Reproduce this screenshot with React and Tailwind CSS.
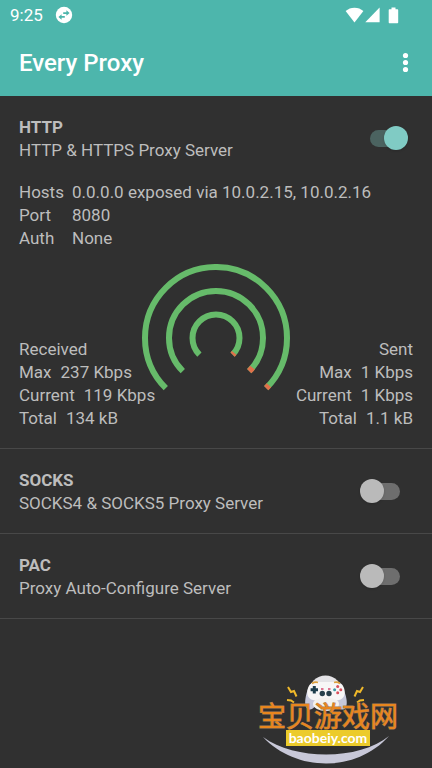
import React, { useState } from 'react';

const servers = [
  { id: 'socks', title: 'SOCKS', description: 'SOCKS4 & SOCKS5 Proxy Server' },
  { id: 'pac', title: 'PAC', description: 'Proxy Auto-Configure Server' },
];

const httpDetails = [
  { label: 'Hosts', value: '0.0.0.0 exposed via 10.0.2.15, 10.0.2.16' },
  { label: 'Port', value: '8080' },
  { label: 'Auth', value: 'None' },
];

const received = [
  { label: 'Max', value: '237 Kbps' },
  { label: 'Current', value: '119 Kbps' },
  { label: 'Total', value: '134 kB' },
];

const sent = [
  { label: 'Max', value: '1 Kbps' },
  { label: 'Current', value: '1 Kbps' },
  { label: 'Total', value: '1.1 kB' },
];

const StatusBar = () => (
  <div className="flex h-[30px] items-center justify-between pl-[10px] pr-[33px]">
    <div className="flex items-center gap-3">
      <span className="text-[17px] leading-[23px]">9:25</span>
      <svg className="size-[18px]" viewBox="0 0 18 18">
        <circle cx="9" cy="9" r="8.2" fill="#fff" />
        <path
          d="M8.2 6.2h3.2V4.2l3.2 2.8-3.2 2.8V7.9H8.2zM9.8 10.1H6.6V8.2L3.4 11l3.2 2.8v-2H9.8z"
          fill="#4db6ac"
        />
      </svg>
    </div>
    <div className="flex items-center">
      <svg className="h-4 w-[19px]" viewBox="0 0 19 16">
        <path d="M9.5 15.4L.6 4.1C3.1 1.8 6.1 .7 9.5 .7s6.4 1.1 8.9 3.4z" fill="#fff" />
      </svg>
      <svg className="ml-px h-4 w-[15px]" viewBox="0 0 15 16">
        <path d="M14.6 .6v14.7H.3z" fill="#fff" />
      </svg>
      <svg className="ml-2 h-[17px] w-[11px]" viewBox="0 0 11 17">
        <path d="M3.5 .6h4v1.6h1.7c.6 0 1 .4 1 1v12c0 .6-.4 1-1 1H1.7c-.6 0-1-.4-1-1v-12c0-.6.4-1 1-1h1.8z" fill="#fff" />
      </svg>
    </div>
  </div>
);

const Switch = ({ id, checked, onChange }) => (
  <input
    id={id}
    type="checkbox"
    role="switch"
    checked={checked}
    onChange={(e) => onChange(e.target.checked)}
    className="relative mr-[5px] h-6 w-12 shrink-0 cursor-pointer appearance-none before:absolute before:left-[10px] before:top-1 before:h-[17px] before:w-[30px] before:rounded-full before:bg-[#6e6e6e] after:absolute after:left-0 after:top-0 after:size-6 after:rounded-full after:bg-[#bababa] after:shadow-sm checked:before:bg-[#4b6360] checked:after:left-6 checked:after:bg-[#80cbc4]"
  />
);

const ServerHeader = ({ id, title, description, checked, onChange }) => (
  <div className="flex items-start justify-between">
    <label htmlFor={id} className="flex flex-col">
      <span className="font-bold">{title}</span>
      <span>{description}</span>
    </label>
    <div className="flex pt-[10px]">
      <Switch id={id} checked={checked} onChange={onChange} />
    </div>
  </div>
);

const Stats = ({ title, items, className }) => (
  <div className={`flex flex-col ${className}`}>
    <h2>{title}</h2>
    {items.map((item) => (
      <p key={item.label} className="flex gap-[9px]">
        <span>{item.label}</span>
        <span>{item.value}</span>
      </p>
    ))}
  </div>
);

const Gauge = () => (
  <svg className="mb-[38px] h-32 w-[148px]" viewBox="0 0 148 128" fill="none" strokeWidth="6">
    <g stroke="#66bb6a">
      <path d="M23.8 124.2A71 71 0 1 1 124.2 124.2" />
      <path d="M40.8 107.2A47 47 0 1 1 107.2 107.2" />
      <path d="M57.4 90.6A23.5 23.5 0 1 1 90.6 90.6" />
    </g>
    <g stroke="#e0704a">
      <path d="M126.9 121.3A71 71 0 0 1 124.2 124.2" />
      <path d="M110.5 103.6A47 47 0 0 1 107.2 107.2" />
      <path d="M92.2 88.9A23.5 23.5 0 0 1 90.6 90.6" />
    </g>
  </svg>
);

// Site mark in the bottom corner
const SiteMark = () => (
  <div className="absolute bottom-0 right-[34px] flex w-[140px] flex-col items-center">
    <svg className="absolute bottom-0 left-0 h-24 w-[140px]" viewBox="0 0 140 96">
      {/* gamepad */}
      <circle cx="67.5" cy="20" r="16.5" fill="#e4e3e6" />
      <path d="M50 17c-2 5-4 14-2 18 2 4 7 3 9-1l4-6h14l4 6c2 4 7 5 9 1 2-4 0-13-3-18z" fill="#c5c7da" />
      <ellipse cx="68" cy="32" rx="13" ry="7" fill="#f3f1ee" />
      <path d="M50 16c2-6 7-7 12-6h12c5-1 10 0 12 6 2 6 0 11-5 12-4 1-6-2-9-2h-8c-3 0-5 3-9 2-5-1-7-6-5-12z" fill="#f7f6f6" />
      <path d="M54 11.5q3-2 6-1M76 10.5q3-1 6 1" fill="none" stroke="#dc9f3c" strokeWidth="1.6" />
      <path d="M56.3 14v7.4M52.6 17.7H60" stroke="#1d3d4c" strokeWidth="3" />
      <circle cx="79.7" cy="14.6" r="1.5" fill="#d9505c" />
      <circle cx="79.7" cy="20.8" r="1.5" fill="#d9505c" />
      <circle cx="76.6" cy="17.7" r="1.5" fill="#3f99a6" />
      <circle cx="82.8" cy="17.7" r="1.5" fill="#d9505c" />
      <path d="M63 17h2.5M70 17h2.5" stroke="#d64a70" strokeWidth="1.4" />
      <circle cx="64.3" cy="21.5" r="2.7" fill="#27404c" />
      <circle cx="71" cy="21.5" r="2.7" fill="#27404c" />
      {/* sparks */}
      <g fill="none" stroke="#f0b92a" strokeWidth="2">
        <path d="M30 15l3 5 3-1 2.500 5.500" />
        <path d="M105 15l-3 5-3-1-2.500 5.500" />
        <path d="M29 28l4 .5 3 2" />
        <path d="M106 28l-4 .5-3 2" />
      </g>
      {/* swoosh */}
      <path d="M5 65C38 100 98 101 131 64C102 88 38 89 5 65z" fill="#c8c8d8" />
    </svg>
    <p className="relative whitespace-nowrap font-['Noto_Sans_CJK_SC',sans-serif] text-[28px] leading-[30px] text-[#e8861e] [-webkit-text-stroke:1px_#a97d4f] [paint-order:stroke]">
      宝贝游戏网
    </p>
    <p className="relative mb-[22px] bg-[#eccb2b] px-[3px] font-[Lato,sans-serif] text-[14px] font-bold leading-4 text-white">
      baobeiy.com
    </p>
  </div>
);

const App = () => {
  const [enabled, setEnabled] = useState({ http: true, socks: false, pac: false });
  const toggle = (id) => (value) => setEnabled((prev) => ({ ...prev, [id]: value }));

  return (
    <div className="relative min-h-screen bg-[#303030] font-[Roboto,sans-serif] text-[17px] leading-[23px] text-[#bdbdbd]">
      {/* App bar */}
      <header className="bg-[#4db6ac] text-white">
        <StatusBar />
        <div className="flex h-[66px] items-center justify-between pl-[19px] pr-[15px]">
          <h1 className="text-[24px] font-medium leading-7">Every Proxy</h1>
          <button type="button" aria-label="More options" className="flex h-6 w-6 items-center justify-center">
            <svg className="h-6 w-[7px]" viewBox="0 0 7 24" fill="#fff">
              <circle cx="3.5" cy="4.5" r="2.6" />
              <circle cx="3.5" cy="11.5" r="2.6" />
              <circle cx="3.5" cy="18.5" r="2.6" />
            </svg>
          </button>
        </div>
      </header>

      <main>
        {/* HTTP */}
        <section className="border-b border-[#484848] px-[19px] pb-[18px] pt-5">
          <ServerHeader
            id="http"
            title="HTTP"
            description="HTTP & HTTPS Proxy Server"
            checked={enabled.http}
            onChange={toggle('http')}
          />
          <dl className="mt-[19px] grid grid-cols-[53px_1fr]">
            {httpDetails.map((row) => (
              <React.Fragment key={row.label}>
                <dt>{row.label}</dt>
                <dd>{row.value}</dd>
              </React.Fragment>
            ))}
          </dl>
          <div className="mt-[14px] grid">
            <div className="col-start-1 row-start-1 flex justify-center">
              <Gauge />
            </div>
            <div className="col-start-1 row-start-1 flex items-end justify-between">
              <Stats title="Received" items={received} className="items-start" />
              <Stats title="Sent" items={sent} className="items-end" />
            </div>
          </div>
        </section>

        {/* Other servers */}
        {servers.map((server) => (
          <section key={server.id} className="border-b border-[#484848] px-[19px] pb-[18px] pt-5">
            <ServerHeader {...server} checked={enabled[server.id]} onChange={toggle(server.id)} />
          </section>
        ))}
      </main>

      <SiteMark />
    </div>
  );
};

export default App;
